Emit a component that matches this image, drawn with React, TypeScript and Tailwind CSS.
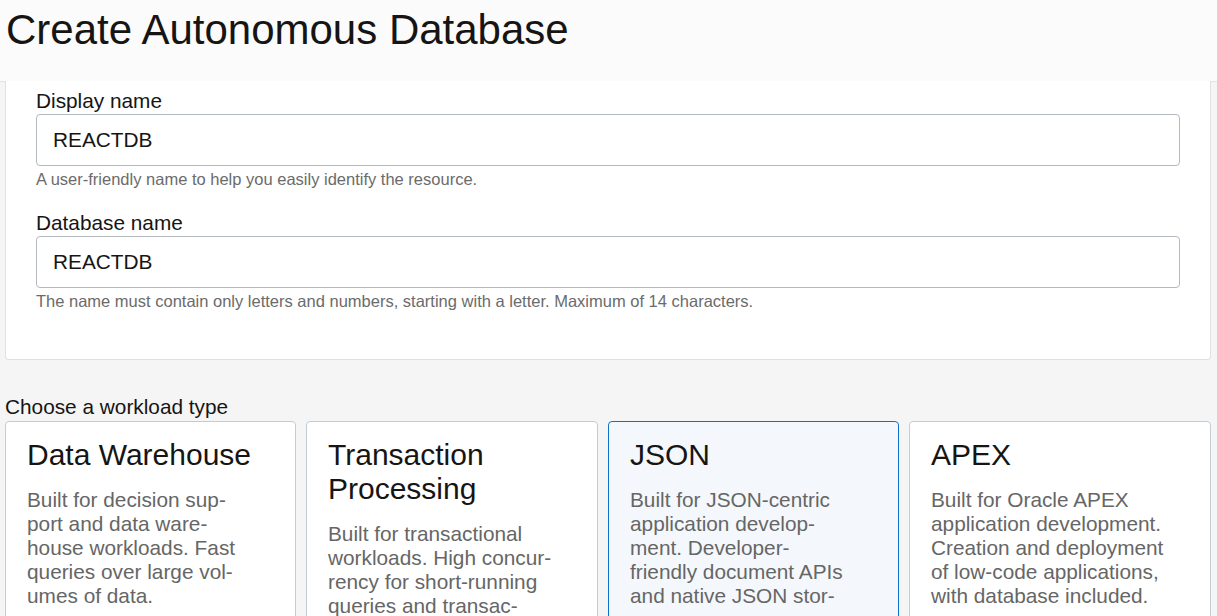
import React from 'react';

const workloads = [
  {
    title: 'Data Warehouse',
    lines: ['Built for decision sup-', 'port and data ware-', 'house workloads. Fast', 'queries over large vol-', 'umes of data.'],
  },
  {
    title: 'Transaction Processing',
    lines: ['Built for transactional', 'workloads. High concur-', 'rency for short-running', 'queries and transac-', 'tions.'],
  },
  {
    title: 'JSON',
    lines: ['Built for JSON-centric', 'application develop-', 'ment. Developer-', 'friendly document APIs', 'and native JSON stor-', 'age.'],
    selected: true,
  },
  {
    title: 'APEX',
    lines: ['Built for Oracle APEX', 'application development.', 'Creation and deployment', 'of low-code applications,', 'with database included.'],
  },
];

const Field = ({ label, value, help }: { label: string; value: string; help: string }) => (
  <div>
    <div className="text-[20.8px] leading-[24px] text-[#161513] mb-[1px]">{label}</div>
    <div className="h-[52px] border border-[#b3b9bf] rounded-[4px] bg-white flex items-center pl-[16px] text-[20.8px] text-[#161513]">
      {value}
    </div>
    <div className="mt-[3px] text-[16.5px] leading-[20px] text-[#6b6b6b]">{help}</div>
  </div>
);

export default function App() {
  return (
    <div className="w-[1217px] h-[616px] overflow-hidden bg-[#f5f5f5] font-['Liberation_Sans',Arial,sans-serif]">
      {/* Page header */}
      <div className="h-[82px] bg-[#fbfbfb] border-b border-[#e4e4e4] pl-[6px] pt-[6px]">
        <h1 className="text-[42px] leading-[48px] text-[#161513]">Create Autonomous Database</h1>
      </div>

      {/* Name panel */}
      <div className="ml-[5px] w-[1206px] h-[279px] -mt-px bg-white border border-t-0 border-[#e0e0e0] rounded-b-[4px] px-[30px] pt-[8px]">
        <Field label="Display name" value="REACTDB" help="A user-friendly name to help you easily identify the resource." />
        <div className="mt-[22px]">
          <Field
            label="Database name"
            value="REACTDB"
            help="The name must contain only letters and numbers, starting with a letter. Maximum of 14 characters."
          />
        </div>
      </div>

      {/* Workload type */}
      <div className="pl-[5px] pt-[35px]">
        <div className="text-[20.8px] leading-[24px] text-[#161513] mb-[2px]">Choose a workload type</div>
        <div className="grid grid-cols-[291px_292px_291px_302px] gap-x-[10px]">
          {workloads.map((w) => (
            <div
              key={w.title}
              className={
                w.selected
                  ? 'h-[260px] rounded-[4px] border border-[#0f6fcc] bg-[#f4f8fc] pl-[21px] pr-[10px] pt-[16px]'
                  : 'h-[260px] rounded-[4px] border border-[#c3ccd5] bg-white pl-[21px] pr-[10px] pt-[16px]'
              }
            >
              <div className="text-[30px] leading-[34px] text-[#161513] pr-[20px]">{w.title}</div>
              <div className="mt-[16px] text-[20.8px] leading-[24px] text-[#666666] whitespace-nowrap">
                {w.lines.map((l, i) => (
                  <React.Fragment key={i}>
                    {l}
                    {i < w.lines.length - 1 && <br />}
                  </React.Fragment>
                ))}
              </div>
            </div>
          ))}
        </div>
      </div>
    </div>
  );
}
